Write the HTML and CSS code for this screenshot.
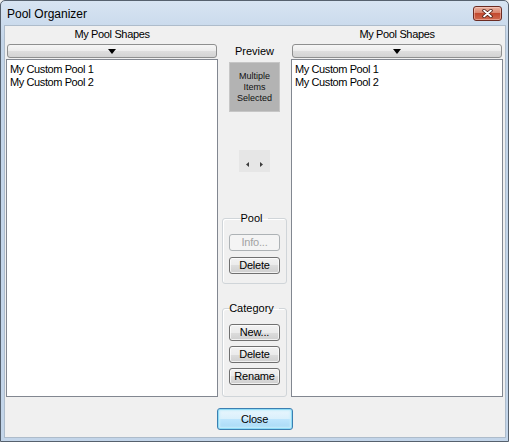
FILE: index.html
```html
<!DOCTYPE html>
<html lang="en">
<head>
  <meta charset="UTF-8">
  <meta name="viewport" content="width=device-width, initial-scale=1.0">
  <link rel="stylesheet" href="styles.css">
  <title>Pool Organizer</title>
</head>
<body>
  <div class="window">
    <header class="titlebar">
      <span class="title">Pool Organizer</span>
      <button class="close-x" aria-label="Close">
        <svg width="11" height="9" viewBox="0 0 11 9">
          <path d="M2 1.5 L9 7.5 M9 1.5 L2 7.5" stroke="#4a1a12" stroke-width="3.4" stroke-linecap="round"/>
          <path d="M2 1.5 L9 7.5 M9 1.5 L2 7.5" stroke="#ffffff" stroke-width="1.8" stroke-linecap="round"/>
        </svg>
      </button>
    </header>

    <main class="client">
      <div class="panes">
        <section class="pane">
          <div class="pane-title">My Pool Shapes</div>
          <button class="dropdown"><span class="caret"></span></button>
          <ul class="list">
            <li>My Custom Pool 1</li>
            <li>My Custom Pool 2</li>
          </ul>
        </section>

        <section class="middle">
          <div class="preview-label">Preview</div>
          <div class="preview">Multiple<br>Items<br>Selected</div>
          <div class="nav">
            <svg width="31" height="22" viewBox="0 0 31 22">
              <polygon points="10,12 7,14.5 10,17" fill="#3c3c3c"/>
              <polygon points="21,12 24,14.5 21,17" fill="#3c3c3c"/>
            </svg>
          </div>

          <fieldset class="group pool">
            <legend>Pool</legend>
            <button class="btn" disabled>Info...</button>
            <button class="btn">Delete</button>
          </fieldset>

          <fieldset class="group category">
            <legend>Category</legend>
            <button class="btn">New...</button>
            <button class="btn">Delete</button>
            <button class="btn">Rename</button>
          </fieldset>
        </section>

        <section class="pane">
          <div class="pane-title">My Pool Shapes</div>
          <button class="dropdown"><span class="caret"></span></button>
          <ul class="list">
            <li>My Custom Pool 1</li>
            <li>My Custom Pool 2</li>
          </ul>
        </section>
      </div>

      <div class="footer">
        <button class="btn default">Close</button>
      </div>
    </main>
  </div>
</body>
</html>
```

FILE: styles.css
```css
:root {
  --frame-top: #d7e4f2;
  --frame-bottom: #c3d5e9;
  --frame-edge: #56616e;
  --client-bg: #f0f0f0;
  --list-border: #828790;
  --btn-border: #707070;
  --group-line: #d0d5d9;
}

* {
  box-sizing: border-box;
}

html, body {
  margin: 0;
  padding: 0;
  background-color: var(--client-bg);
}

body {
  font-family: "Liberation Sans", Arial, sans-serif;
  font-size: 11px;
  color: #000;
}

button {
  font-family: inherit;
  font-size: inherit;
  color: inherit;
}

.window {
  display: flex;
  flex-direction: column;
  width: 509px;
  height: 442px;
  border: 1px solid var(--frame-edge);
  border-radius: 5px 5px 0 0;
  padding: 0 3px 4px 4px;
  background: linear-gradient(var(--frame-top), var(--frame-bottom) 40px, var(--frame-bottom));
}

/* title bar */
.titlebar {
  display: flex;
  align-items: center;
  height: 25px;
  padding: 0 3px 0 2px;
}

.title {
  font-size: 12px;
  color: #000;
}

.close-x {
  display: grid;
  place-items: center;
  margin-left: auto;
  width: 29px;
  height: 15px;
  padding: 0;
  border: 1px solid #6b2b22;
  border-radius: 3px;
  background: linear-gradient(#eab2a2 0%, #d9846d 45%, #c3492f 50%, #d06a50 100%);
  box-shadow: inset 0 0 0 1px rgba(255, 220, 210, 0.45);
}

/* client area */
.client {
  display: flex;
  flex-direction: column;
  height: 411px;
  padding: 0 2px 0 1px;
  background-color: var(--client-bg);
  box-shadow: 0 0 0 1px #aebccb;
}

.panes {
  display: grid;
  grid-template-columns: 212px 65px 212px;
  column-gap: 4px;
  height: 371px;
}

.pane {
  display: flex;
  flex-direction: column;
}

.pane-title {
  height: 18px;
  line-height: 16px;
  text-align: center;
  letter-spacing: -0.35px;
}

.dropdown {
  display: grid;
  place-items: center;
  height: 14px;
  margin: 0 1px;
  padding: 0;
  border: 1px solid #8e8f8f;
  border-radius: 3px;
  background: linear-gradient(#f6f6f6 0%, #ececec 50%, #dedede 50%, #d3d3d3 100%);
}

.caret {
  width: 0;
  height: 0;
  border-left: 4.5px solid transparent;
  border-right: 4.5px solid transparent;
  border-top: 5px solid #000;
}

.list {
  flex: 1;
  margin: 1px 0 0;
  padding: 3px 3px;
  list-style: none;
  background-color: #fff;
  border: 1px solid var(--list-border);
}

.list li {
  line-height: 13px;
  letter-spacing: -0.4px;
}

/* middle column */
.middle {
  display: flex;
  flex-direction: column;
  align-items: center;
}

.preview-label {
  margin-top: 18px;
  height: 14px;
  line-height: 14px;
}

.preview {
  display: flex;
  align-items: center;
  justify-content: center;
  margin-top: 4px;
  width: 51px;
  height: 50px;
  font-size: 9px;
  line-height: 11px;
  text-align: center;
  color: #111;
  background-color: #b3b3b3;
  border: 1px solid #c6c6c6;
}

.nav {
  margin-top: 38px;
  width: 31px;
  height: 22px;
  background-color: #e6e6e6;
}

.nav svg {
  display: block;
}

.group {
  display: flex;
  flex-direction: column;
  align-items: center;
  width: 65px;
  margin: 40px 0 0;
  padding: 9px 0 9px;
  border: 1px solid var(--group-line);
  border-radius: 3px;
  box-shadow: inset 1px 1px 0 #fff;
}

.group legend {
  margin: 0 auto;
  padding: 0 2px;
  line-height: 13px;
  transform: translateX(-3px);
}

.group .btn + .btn {
  margin-top: 6px;
}

.category {
  margin-top: 18px;
  padding-bottom: 11px;
}

.category .btn + .btn {
  margin-top: 5px;
}

/* push buttons */
.btn {
  width: 51px;
  height: 17px;
  padding: 0;
  line-height: 15px;
  letter-spacing: -0.2px;
  border: 1px solid var(--btn-border);
  border-radius: 3px;
  background: linear-gradient(#f2f2f2 0%, #ebebeb 50%, #dddddd 50%, #cfcfcf 100%);
  box-shadow: inset 0 0 0 1px rgba(255, 255, 255, 0.7);
}

.btn:disabled {
  color: #a3a3a3;
  border-color: #adb2b5;
  background: #f4f4f4;
  box-shadow: none;
}

.footer {
  display: flex;
  justify-content: center;
  padding-top: 11px;
}

.btn.default {
  width: 76px;
  height: 22px;
  line-height: 20px;
  border-color: #3c7fb1;
  background: linear-gradient(#eaf6fd 0%, #d9f0fc 50%, #bee6fd 50%, #a7d9f5 100%);
  box-shadow: inset 0 0 0 1px #8fdcf6, inset 0 0 2px 2px #c9eefb;
}
```
